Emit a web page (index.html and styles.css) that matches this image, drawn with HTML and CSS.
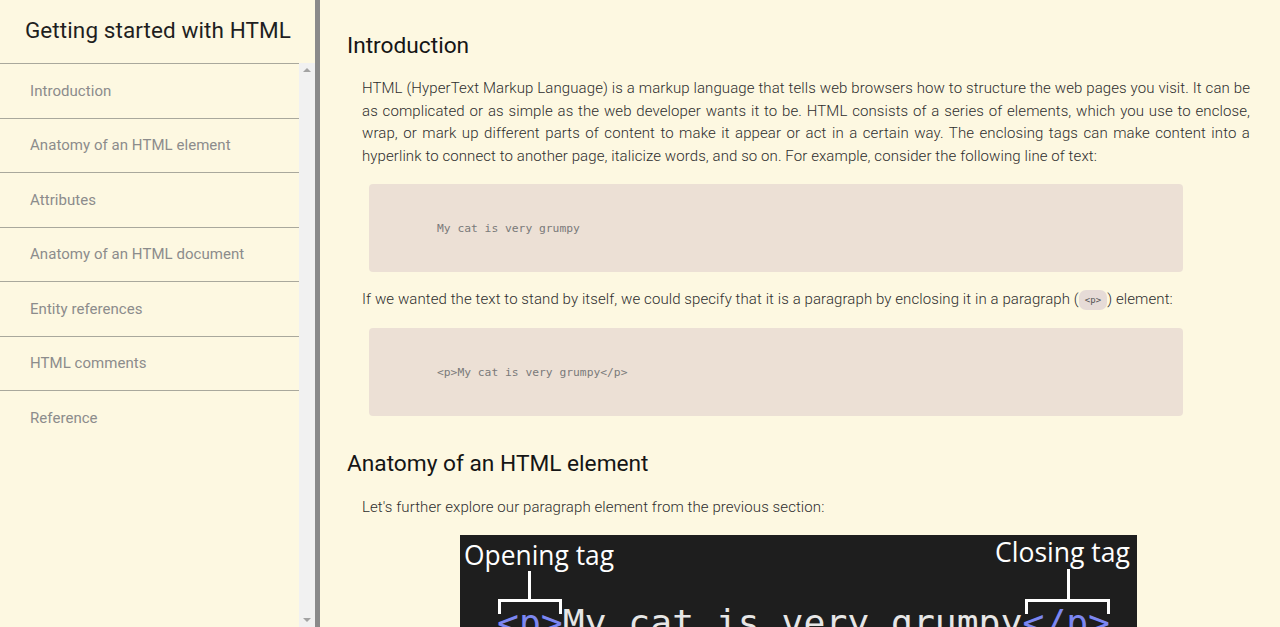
FILE: index.html
```html
<!DOCTYPE html>
<html lang="en">
<head>
<meta charset="utf-8">
<title>Getting started with HTML</title>
<link rel="stylesheet" href="styles.css">
</head>
<body>
<aside class="sidebar">
  <header class="sidebar-head">
    <h1 class="sidebar-title">Getting started with HTML</h1>
  </header>
  <div class="sidebar-body">
    <nav class="toc">
      <a class="toc-item" href="#intro">Introduction</a>
      <a class="toc-item" href="#anatomy">Anatomy of an HTML element</a>
      <a class="toc-item" href="#attributes">Attributes</a>
      <a class="toc-item" href="#document">Anatomy of an HTML document</a>
      <a class="toc-item" href="#entities">Entity references</a>
      <a class="toc-item" href="#comments">HTML comments</a>
      <a class="toc-item" href="#reference">Reference</a>
    </nav>
    <div class="scrolltrack">
      <span class="arrow arrow-up"></span>
      <span class="arrow arrow-down"></span>
    </div>
  </div>
</aside>
<main class="content">
  <section id="intro" class="section">
    <h2 class="section-title">Introduction</h2>
    <p class="text">HTML (HyperText Markup Language) is a markup language that tells web browsers how to structure the web pages you visit. It can be as complicated or as simple as the web developer wants it to be. HTML consists of a series of elements, which you use to enclose, wrap, or mark up different parts of content to make it appear or act in a certain way. The enclosing tags can make content into a hyperlink to connect to another page, italicize words, and so on. For example, consider the following line of text:</p>
    <pre class="code">My cat is very grumpy</pre>
    <p class="text">If we wanted the text to stand by itself, we could specify that it is a paragraph by enclosing it in a paragraph (<code class="inline-code">&lt;p&gt;</code>) element:</p>
    <pre class="code">&lt;p&gt;My cat is very grumpy&lt;/p&gt;</pre>
  </section>
  <section id="anatomy" class="section">
    <h2 class="section-title second">Anatomy of an HTML element</h2>
    <p class="text after-title">Let's further explore our paragraph element from the previous section:</p>
    <figure class="figure">
      <svg class="diagram" width="677" height="200" viewBox="0 0 677 200" xmlns="http://www.w3.org/2000/svg">
        <rect x="0" y="0" width="677" height="200" fill="#1e1e1e"/>
        <text x="4" y="30" font-family="Open Sans, sans-serif" font-size="27" fill="#ffffff" textLength="150" lengthAdjust="spacingAndGlyphs">Opening tag</text>
        <text x="535" y="27" font-family="Open Sans, sans-serif" font-size="27" fill="#ffffff" textLength="135" lengthAdjust="spacingAndGlyphs">Closing tag</text>
        <g stroke="#ffffff" stroke-width="3" fill="none">
          <path d="M69.5 36 V65.5 M39.5 79 V65.5 H100.5 V79"/>
          <path d="M608.5 34 V65.5 M566.5 79 V65.5 H648.5 V79"/>
        </g>
        <text x="37" y="100" font-family="DejaVu Sans Mono, monospace" font-size="36" textLength="613" lengthAdjust="spacingAndGlyphs"><tspan fill="#7c87f2">&lt;p&gt;</tspan><tspan fill="#e6e6e6">My cat is very grumpy</tspan><tspan fill="#7c87f2">&lt;/p&gt;</tspan></text>
      </svg>
    </figure>
  </section>
</main>
</body>
</html>
```
FILE: styles.css
```css
* { box-sizing: border-box; }
html, body { margin: 0; padding: 0; height: 100%; }
body {
  display: flex;
  background: #fdf8e1;
  font-family: Roboto, "Liberation Sans", sans-serif;
  overflow: hidden;
}
.sidebar {
  flex: 0 0 320px;
  width: 320px;
  height: 100vh;
  border-right: 5px solid #8a8a8a;
  display: flex;
  flex-direction: column;
}
.sidebar-head {
  height: 63px;
  display: flex;
  align-items: center;
  justify-content: center;
  padding-left: 1px;
  padding-bottom: 3px;
}
.sidebar-title {
  margin: 0;
  font-size: 22.5px;
  font-weight: 400;
  color: #1f1f1f;
  letter-spacing: 0.1px;
}
.sidebar-body {
  flex: 1;
  display: flex;
  min-height: 0;
}
.toc {
  width: 299px;
  display: flex;
  flex-direction: column;
}
.toc-item {
  display: flex;
  align-items: center;
  height: 54.5px;
  padding: 0 30px;
  border-top: 1px solid #a9a89c;
  color: #8c8c8c;
  font-size: 15px;
  letter-spacing: 0.05px;
  text-decoration: none;
}
.scrolltrack {
  width: 16px;
  background: #f1f1f1;
  display: flex;
  flex-direction: column;
  justify-content: space-between;
  align-items: center;
  padding: 5px 0;
}
.arrow {
  width: 0;
  height: 0;
  border-left: 4px solid transparent;
  border-right: 4px solid transparent;
}
.arrow-up { border-bottom: 4px solid #a3a3a3; }
.arrow-down { border-top: 4px solid #a3a3a3; }
.content {
  flex: 1;
  padding: 33px 30px 0 27px;
  height: 100vh;
  overflow: hidden;
}
.section-title {
  margin: 0;
  font-size: 22.7px;
  line-height: 26px;
  font-weight: 400;
  color: #151515;
}
.section-title.second { margin-top: 35px; }
.text {
  margin: 18px 0 0 15px;
  font-size: 15px;
  line-height: 22.6px;
  font-weight: 300;
  letter-spacing: 0.09px;
  color: #2e2e2e;
  text-align: justify;
}
.text.after-title { margin-top: 19px; }
.code {
  margin: 17px 0 0 22px;
  width: 814px;
  padding: 39px 68px 37px;
  background: #ece0d5;
  border-radius: 4px;
  font-family: "DejaVu Sans Mono", "Liberation Mono", monospace;
  font-size: 11.3px;
  line-height: 12px;
  color: #7a7a7a;
}
.code + .text { margin-top: 16px; }
.inline-code {
  display: inline-block;
  font-family: "DejaVu Sans Mono", "Liberation Mono", monospace;
  font-size: 9px;
  line-height: 14px;
  padding: 3px 6px;
  background: #e6dbd7;
  color: #555;
  border-radius: 7px;
  vertical-align: middle;
}
.figure {
  margin: 16px 0 0 0;
  display: flex;
  justify-content: center;
}
.diagram { display: block; }
```
